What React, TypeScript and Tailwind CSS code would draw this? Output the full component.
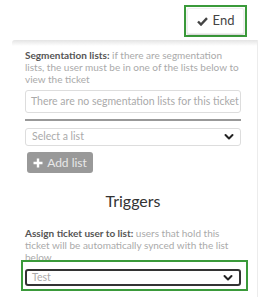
import React from "react";

const Chevron = () => (
  <svg width="10" height="7" viewBox="0 0 10 7" className="absolute right-[6px] top-1/2 -translate-y-1/2">
    <path d="M1.5 1.5 L5 5 L8.5 1.5" fill="none" stroke="#222" strokeWidth="2" strokeLinecap="round" strokeLinejoin="round" />
  </svg>
);

export default function App() {
  return (
    <div className="w-[263px] h-[297px] bg-white overflow-hidden" style={{ fontFamily: "Lato, 'Open Sans', sans-serif" }}>
      <div className="flex justify-end pt-[5px] pr-[16px]">
        <div className="border-2 border-[#3a9a3a] p-[1px] w-[63px] h-[32px]">
          <button className="w-full h-full bg-white rounded-[2px] shadow-[0_1px_2px_rgba(0,0,0,0.2)] border border-[#eee] flex items-center justify-center gap-[5px] text-[13px] text-[#444]">
            <svg width="11" height="9" viewBox="0 0 11 9">
              <path d="M1 4.5 L4 7.5 L10 1.2" fill="none" stroke="#444" strokeWidth="2.4" />
            </svg>
            <span>End</span>
          </button>
        </div>
      </div>
      <div className="mt-[3px] ml-[12px] w-[246px] h-[257px] border-r border-[#ececec] bg-white relative">
        <div className="h-[6px] bg-gradient-to-b from-[#e4e4e4] to-white rounded-tl-[3px]" />
        <div className="pl-[13px] pr-[16px] pt-[3px]">
          <p className="text-[10px] leading-[12px] text-[#aaa] whitespace-nowrap -mr-[10px]">
            <span className="font-bold text-[#555]">Segmentation lists:</span> if there are segmentation
            <br />
            lists, the user must be in one of the lists below to
            <br />
            view the ticket
          </p>
          <div className="mt-[5px] h-[23px] border border-[#ddd] rounded-[3px] flex items-center px-[5px] text-[10.5px] text-[#aaa] whitespace-nowrap overflow-hidden">
            There are no segmentation lists for this ticket
          </div>
          <div className="mt-[6px] h-[2px] bg-[#999]" />
          <div className="mt-[7px] h-[18px] border border-[#ddd] rounded-[3px] flex items-center px-[6px] text-[10.5px] text-[#aaa] relative">
            Select a list
            <Chevron />
          </div>
          <button className="mt-[6px] ml-[2px] w-[66px] h-[21px] bg-[#999] rounded-[3px] flex items-center justify-center gap-[4px] text-white text-[12px]">
            <svg width="10" height="10" viewBox="0 0 10 10">
              <path d="M5 0.5 V9.5 M0.5 5 H9.5" stroke="#fff" strokeWidth="2.4" />
            </svg>
            <span className="text-[#e8e8e8]">Add list</span>
          </button>
          <h2 className="mt-[20px] text-center text-[16px] leading-[16px] text-[#333]">Triggers</h2>
          <p className="mt-[18px] text-[10px] leading-[12px] text-[#aaa] whitespace-nowrap -mr-[10px]">
            <span className="font-bold text-[#555]">Assign ticket user to list:</span> users that hold this
            <br />
            ticket will be automatically synced with the list
            <br />
            below
          </p>
          <div className="-mt-[3px] -ml-[4px] -mr-[7px] border-2 border-[#3a9a3a] pt-[7px] pb-[3px] pl-[2px] pr-[5px] relative">
            <div className="h-[17px] border-2 border-[#333] rounded-[3px] flex items-center px-[5px] text-[10.5px] text-[#aaa] relative bg-white">
              Test
              <Chevron />
            </div>
          </div>
        </div>
      </div>
    </div>
  );
}
